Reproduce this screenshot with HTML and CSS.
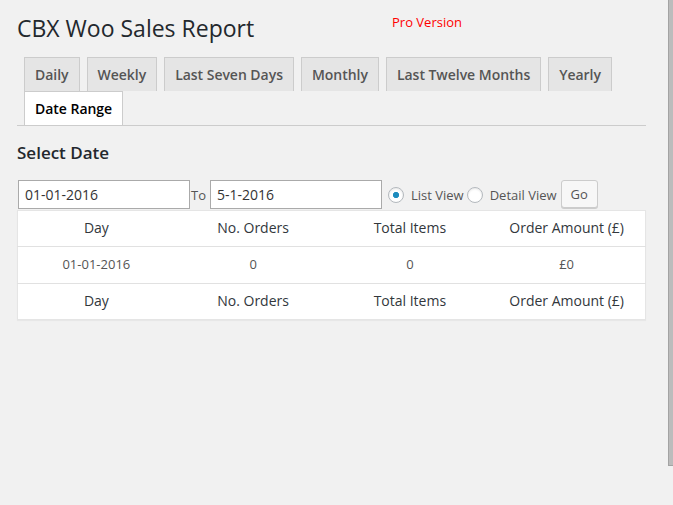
FILE: index.html
```html
<!DOCTYPE html>
<html lang="en">
<head>
<meta charset="utf-8">
<title>CBX Woo Sales Report</title>
<link rel="stylesheet" href="styles.css">
</head>
<body>
<div class="wrap">
  <div class="page-head">
    <h1 class="page-title">CBX Woo Sales Report</h1>
    <span class="pro">Pro Version</span>
  </div>

  <nav class="nav-tabs">
    <a class="nav-tab">Daily</a>
    <a class="nav-tab">Weekly</a>
    <a class="nav-tab">Last Seven Days</a>
    <a class="nav-tab">Monthly</a>
    <a class="nav-tab">Last Twelve Months</a>
    <a class="nav-tab">Yearly</a>
    <a class="nav-tab active">Date Range</a>
  </nav>

  <h3 class="section-title">Select Date</h3>

  <form class="date-form">
    <input class="date-input" type="text" value="01-01-2016">
    <span class="to">To</span>
    <input class="date-input" type="text" value="5-1-2016">
    <input class="radio first" type="radio" name="view" checked>
    <span class="radio-label">List View</span>
    <input class="radio" type="radio" name="view">
    <span class="radio-label">Detail View</span>
    <button class="btn" type="button">Go</button>
  </form>

  <table class="report">
    <thead>
      <tr><th>Day</th><th>No. Orders</th><th>Total Items</th><th>Order Amount (£)</th></tr>
    </thead>
    <tbody>
      <tr><td>01-01-2016</td><td>0</td><td>0</td><td>£0</td></tr>
    </tbody>
    <tfoot>
      <tr><th>Day</th><th>No. Orders</th><th>Total Items</th><th>Order Amount (£)</th></tr>
    </tfoot>
  </table>
</div>
<div class="scroll-thumb"></div>
</body>
</html>
```

FILE: styles.css
```css
html, body {
  margin: 0;
  padding: 0;
  background: #f1f1f1;
}

body {
  font-family: "Open Sans", "Liberation Sans", sans-serif;
  color: #444;
  font-size: 13px;
  min-height: 505px;
}

.wrap {
  width: 629px;
  padding-left: 17px;
}

.page-head {
  display: flex;
  align-items: flex-start;
  padding-top: 13px;
}

.page-title {
  flex: 0 0 375px;
  margin: 0;
  font-size: 23px;
  font-weight: 400;
  line-height: 30px;
  color: #23282d;
}

.pro {
  margin-top: 0;
  font-size: 13px;
  line-height: 18px;
  color: #ff0000;
}

.nav-tabs {
  display: flex;
  flex-wrap: wrap;
  margin-top: 14px;
  border-bottom: 1px solid #ccc;
}

.nav-tab {
  margin-left: 7px;
  padding: 5px 10px 4px;
  border: 1px solid #ccc;
  border-bottom: none;
  background: #e5e5e5;
  color: #555;
  font-size: 14px;
  font-weight: 600;
  line-height: 24px;
  letter-spacing: -0.03px;
  white-space: nowrap;
}

.nav-tab.active {
  background: #fff;
  color: #000;
}

.section-title {
  margin: 16px 0 0;
  font-size: 17px;
  font-weight: 600;
  line-height: 22px;
  color: #23282d;
}

.date-form {
  display: flex;
  align-items: center;
  margin: 16px 0 0;
  height: 29px;
}

.date-input {
  box-sizing: border-box;
  width: 172px;
  height: 29px;
  margin: 0 1px;
  padding: 0 6px;
  border: 1px solid #aaa;
  background: #fff;
  font-family: inherit;
  font-size: 14px;
  color: #333;
  outline: none;
}

.to {
  margin: 0 3px 0 0;
  color: #555;
  font-size: 13px;
}

.radio {
  appearance: none;
  -webkit-appearance: none;
  box-sizing: border-box;
  width: 16px;
  height: 16px;
  margin: 0 0 0 3px;
  border: 1px solid #b4b9be;
  border-radius: 50%;
  background: #fff;
  box-shadow: inset 0 1px 2px rgba(0, 0, 0, 0.1);
}

.radio.first {
  margin-left: 5px;
}

.radio:checked {
  background: radial-gradient(circle, #1e8cbe 0 2.8px, #fff 3.4px);
}

.radio-label {
  margin-left: 7px;
  color: #555;
  font-size: 13px;
}

.btn {
  box-sizing: border-box;
  height: 28px;
  margin: -2px 0 0 4px;
  padding: 0 9px 1px;
  border: 1px solid #ccc;
  border-radius: 3px;
  background: #f7f7f7;
  box-shadow: 0 1px 0 #ccc;
  color: #555;
  font-family: inherit;
  font-size: 13px;
  line-height: 26px;
}

.report {
  width: 629px;
  margin-top: 1px;
  border-collapse: collapse;
  table-layout: fixed;
  background: #fff;
  border: 1px solid #e5e5e5;
  box-shadow: 0 1px 1px rgba(0, 0, 0, 0.04);
}

.report th {
  width: 25%;
  padding: 7px 10px 8px;
  font-size: 14px;
  font-weight: 400;
  line-height: 20px;
  color: #32373c;
  text-align: center;
}

.report thead th {
  border-bottom: 1px solid #e1e1e1;
}

.report tfoot th {
  border-top: 1px solid #e1e1e1;
}

.report td {
  padding: 8px 10px;
  font-size: 13px;
  line-height: 19.5px;
  color: #555;
  text-align: center;
}

.scroll-thumb {
  position: fixed;
  top: 0;
  right: 0;
  box-sizing: border-box;
  width: 5px;
  height: 466px;
  background: #bcbcbc;
  border-left: 1px solid #a3a3a3;
  border-bottom: 1px solid #a3a3a3;
}
```
